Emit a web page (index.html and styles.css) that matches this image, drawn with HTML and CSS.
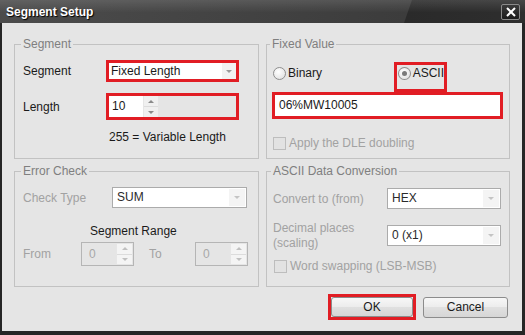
FILE: index.html
```html
<!DOCTYPE html>
<html lang="en">
<head>
    <meta charset="UTF-8">
    <title>Segment Setup</title>
    <link rel="stylesheet" href="styles.css">
</head>
<body>

    <div class="window">
        <div class="titlebar">
            <span class="title">Segment Setup</span>
            <span class="close">
                <svg width="12" height="10" viewBox="0 0 12 10">
                    <path d="M2 1 L10 9 M10 1 L2 9" stroke="#fff" stroke-width="2" fill="none"/>
                </svg>
            </span>
        </div>

        <div class="client">
            <div class="groups">

                <fieldset class="group group-segment">
                    <legend>Segment</legend>
                    <div class="row seg-row1">
                        <span class="label seg-label">Segment</span>
                        <div class="hl seg-combo">
                            <div class="combo">
                                <span class="combo-text">Fixed Length</span>
                                <span class="combo-arrow"></span>
                            </div>
                        </div>
                    </div>
                    <div class="row seg-row2">
                        <span class="label seg-label">Length</span>
                        <div class="hl seg-length">
                            <span class="spin-text">10</span>
                            <span class="spin-buttons">
                                <span class="spin-up"></span>
                                <span class="spin-down"></span>
                            </span>
                        </div>
                    </div>
                    <p class="seg-note">255 = Variable Length</p>
                </fieldset>

                <fieldset class="group group-fixed">
                    <legend>Fixed Value</legend>
                    <div class="radio-row">
                        <label class="radio-item binary">
                            <span class="radio"></span>Binary
                        </label>
                        <div class="hl ascii-hl">
                            <label class="radio-item">
                                <span class="radio checked"></span>ASCII
                            </label>
                        </div>
                    </div>
                    <div class="hl text-hl">
                        <span class="text-value">06%MW10005</span>
                    </div>
                    <label class="check-row disabled">
                        <span class="checkbox"></span>Apply the DLE doubling
                    </label>
                </fieldset>

                <fieldset class="group group-error">
                    <legend>Error Check</legend>
                    <div class="row ec-row1">
                        <span class="label disabled ec-label">Check Type</span>
                        <div class="combo combo-off ec-combo">
                            <span class="combo-text">SUM</span>
                            <span class="combo-arrow"></span>
                        </div>
                    </div>
                    <p class="range-title">Segment Range</p>
                    <div class="row range-row">
                        <span class="label disabled from-label">From</span>
                        <div class="spin-off">
                            <span class="spin-text">0</span>
                            <span class="spin-buttons">
                                <span class="spin-up"></span>
                                <span class="spin-down"></span>
                            </span>
                        </div>
                        <span class="label disabled to-label">To</span>
                        <div class="spin-off">
                            <span class="spin-text">0</span>
                            <span class="spin-buttons">
                                <span class="spin-up"></span>
                                <span class="spin-down"></span>
                            </span>
                        </div>
                    </div>
                </fieldset>

                <fieldset class="group group-conv">
                    <legend>ASCII Data Conversion</legend>
                    <div class="row conv-row1">
                        <span class="label disabled conv-label">Convert to (from)</span>
                        <div class="combo combo-off conv-combo">
                            <span class="combo-text">HEX</span>
                            <span class="combo-arrow"></span>
                        </div>
                    </div>
                    <div class="row conv-row2">
                        <span class="label disabled conv-label two-line">Decimal places<br>(scaling)</span>
                        <div class="combo combo-off conv-combo">
                            <span class="combo-text">0 (x1)</span>
                            <span class="combo-arrow"></span>
                        </div>
                    </div>
                    <label class="check-row disabled conv-check">
                        <span class="checkbox"></span>Word swapping (LSB-MSB)
                    </label>
                </fieldset>

            </div>

            <div class="buttons">
                <div class="hl ok-hl">
                    <button class="btn ok">OK</button>
                </div>
                <button class="btn cancel">Cancel</button>
            </div>
        </div>
    </div>

</body>
</html>
```

FILE: styles.css
```css
* {
    box-sizing: border-box;
}

body {
    margin: 0;
    background: #222;
    font-family: "Liberation Sans", Arial, sans-serif;
    font-size: 12px;
    color: #1a1a1a;
}

.window {
    width: 525px;
    height: 335px;
    background: #262626;
}

.titlebar {
    height: 23px;
    display: flex;
    align-items: center;
    justify-content: space-between;
    padding: 0 5px 0 6px;
    background:
        linear-gradient(to bottom, rgba(255, 255, 255, 0.12), rgba(255, 255, 255, 0) 55%),
        linear-gradient(109deg, #4c4c4c 0, #3c3c3c 389px, #2a2a2a 390px, #2e2e2e 100%);
}

.title {
    color: #fff;
    font-weight: bold;
    font-size: 12px;
    text-shadow: 1px 1px 1px #000;
}

.close {
    width: 19px;
    height: 16px;
    border: 1px solid #8a8a8a;
    border-radius: 2px;
    background: linear-gradient(#3a3a3a, #1c1c1c);
    display: flex;
    align-items: center;
    justify-content: center;
}

.client {
    background: #e5e5e5;
    height: 308px;
    margin: 0 3px 0 2px;
    padding: 14px 12px 0 12px;
}

.groups {
    display: grid;
    grid-template-columns: 245px 244px;
    grid-template-rows: 122px 123px;
    column-gap: 7px;
    row-gap: 5px;
}

.group {
    margin: 0;
    padding: 0 0 0 8px;
    min-width: 0;
    border: 1px solid #c2c2c2;
}

.group legend {
    padding: 0 2px;
    margin-left: -2px;
    line-height: 14px;
    color: #7f7f7f;
}

.group-fixed {
    padding-left: 5px;
}

.group-conv {
    padding-left: 6px;
}

.row {
    display: flex;
    align-items: center;
}

.label {
    flex: none;
    line-height: 14px;
}

.disabled {
    color: #a2a2a2;
}

/* red highlight boxes */
.hl {
    border: 3px solid #e11d24;
}

/* Segment group */
.seg-row1 {
    margin-top: 9px;
    height: 22px;
}

.seg-row2 {
    margin-top: 11px;
    height: 27px;
}

.seg-label {
    width: 83px;
}

.seg-combo {
    width: 133px;
    height: 22px;
}

.combo {
    display: flex;
    height: 100%;
    background: #fff;
}

.combo-text {
    flex: 1;
    padding-left: 2px;
    line-height: 16px;
}

.combo-arrow {
    width: 14px;
    background: #f2f2f2;
    display: flex;
    align-items: center;
    justify-content: center;
}

.combo-arrow::after {
    content: "";
    border-left: 3px solid transparent;
    border-right: 3px solid transparent;
    border-top: 3px solid #9a9a9a;
}

.seg-length {
    width: 133px;
    height: 27px;
    display: flex;
}

.spin-text {
    width: 34px;
    background: #fff;
    padding-left: 3px;
    line-height: 21px;
}

.spin-buttons {
    width: 15px;
    display: flex;
    flex-direction: column;
    background: #f0f0f0;
    border-left: 1px solid #e6e6e6;
}

.spin-up,
.spin-down {
    flex: 1;
    display: flex;
    align-items: center;
    justify-content: center;
}

.spin-up {
    border-bottom: 1px solid #dcdcdc;
}

.spin-up::after {
    content: "";
    border-left: 3px solid transparent;
    border-right: 3px solid transparent;
    border-bottom: 3px solid #8a8a8a;
}

.spin-down::after {
    content: "";
    border-left: 3px solid transparent;
    border-right: 3px solid transparent;
    border-top: 3px solid #8a8a8a;
}

.seg-note {
    margin: 10px 0 0;
    padding-left: 86px;
    line-height: 14px;
}

/* Fixed value group */
.radio-row {
    margin-top: 11px;
    height: 30px;
    display: flex;
    align-items: flex-start;
}

.radio-item {
    display: flex;
    align-items: center;
    gap: 2px;
    line-height: 14px;
}

.binary {
    width: 121px;
    margin: 4px 0 0 1px;
}

.radio {
    width: 13px;
    height: 13px;
    border-radius: 50%;
    border: 1px solid #8e8e8e;
    background: radial-gradient(circle at 40% 35%, #fff, #dcdcdc);
    display: flex;
    align-items: center;
    justify-content: center;
}

.radio.checked::after {
    content: "";
    width: 5px;
    height: 5px;
    border-radius: 50%;
    background: #7a7a7a;
}

.ascii-hl {
    width: 53px;
    height: 30px;
    padding: 1px 0 0 1px;
}

.text-hl {
    width: 231px;
    height: 27px;
    background: #fff;
}

.text-value {
    display: block;
    padding-left: 4px;
    line-height: 21px;
}

.check-row {
    margin-top: 17px;
    padding-left: 1px;
    display: flex;
    align-items: center;
    gap: 3px;
    line-height: 14px;
}

.checkbox {
    width: 13px;
    height: 13px;
    border: 1px solid #bdbdbd;
    background: #e2e2e2;
}

/* Error check group */
.ec-row1 {
    margin-top: 9px;
    height: 21px;
}

.ec-label {
    width: 89px;
}

.combo-off {
    border: 1px solid #ababab;
    padding: 1px;
    background: #fff;
}

.combo-off .combo-text {
    padding-left: 3px;
    line-height: 17px;
    color: #2a2a2a;
}

.combo-off .combo-arrow {
    width: 16px;
    background: #f4f4f4;
}

.combo-off .combo-arrow::after {
    border-top-color: #c4c4c4;
}

.ec-combo {
    width: 135px;
    height: 21px;
}

.range-title {
    margin: 16px 0 0;
    padding-left: 67px;
    line-height: 14px;
}

.range-row {
    margin-top: 4px;
    height: 24px;
}

.from-label {
    width: 58px;
}

.to-label {
    width: 46px;
    margin-left: 15px;
}

.spin-off {
    width: 53px;
    height: 24px;
    border: 1px solid #b5b5b5;
    display: flex;
    justify-content: space-between;
    padding: 1px;
}

.spin-off .spin-text {
    background: transparent;
    color: #a8a8a8;
    padding-left: 6px;
    line-height: 20px;
}

.spin-off .spin-buttons {
    width: 16px;
    background: #f4f4f4;
}

.spin-off .spin-up::after {
    border-bottom-color: #c0c0c0;
}

.spin-off .spin-down::after {
    border-top-color: #c0c0c0;
}

/* ASCII data conversion group */
.conv-row1 {
    margin-top: 10px;
    height: 21px;
}

.conv-row2 {
    margin-top: 16px;
    height: 21px;
}

.conv-label {
    width: 114px;
}

.two-line {
    line-height: 15px;
}

.conv-combo {
    width: 114px;
    height: 21px;
}

.conv-check {
    margin-top: 13px;
}

/* Dialog buttons */
.buttons {
    margin: 7px 2px 0 0;
    display: flex;
    justify-content: flex-end;
    align-items: center;
    gap: 7px;
}

.btn {
    font-family: inherit;
    font-size: 12px;
    color: #1a1a1a;
    border: 1px solid #8c8c8c;
    border-radius: 3px;
    background: linear-gradient(#f7f7f7, #ececec 50%, #e0e0e0 50%, #d6d6d6);
    padding: 0;
}

.ok-hl {
    width: 88px;
    height: 26px;
}

.ok {
    width: 100%;
    height: 100%;
}

.cancel {
    width: 85px;
    height: 21px;
}
```
